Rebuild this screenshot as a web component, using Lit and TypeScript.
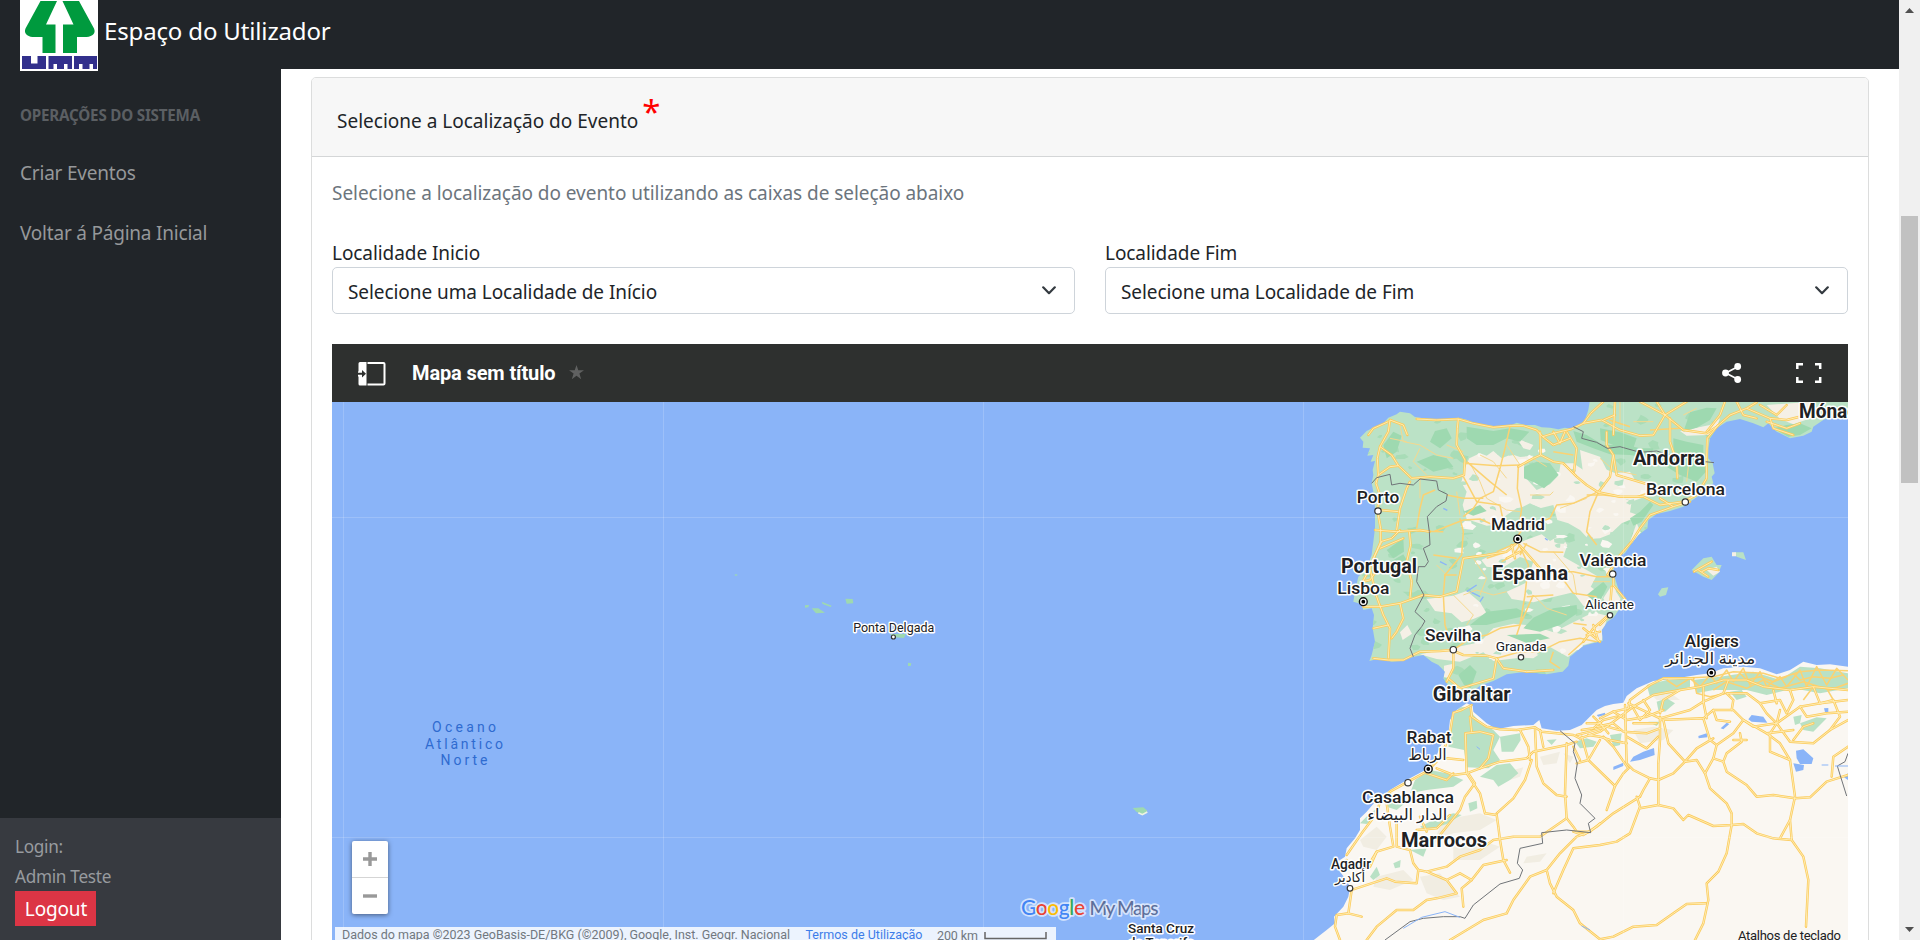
import { LitElement, html, svg, css } from "lit";
import { customElement, property } from "lit/decorators.js";

/* ---------- map data: north sheet (Iberia, southern France), 3 units per pixel ---------- */
const IBERIA =
  "M810 15 805 45 795 75 775 92 755 102 735 98 715 103 690 98 665 97 645 90 615 90 590 83 570 92 545 97 520 93 490 90 460 83 440 74 415 68 385 73 350 73 310 70 285 66 270 55 240 50 230 58 205 68 190 85 165 95 140 108 120 128 130 140 128 158 150 160 142 182 160 180 152 200 165 198 158 225 160 240 155 265 162 300 165 340 165 400 160 440 155 480 140 520 115 545 105 590 100 620 125 628 130 645 155 640 162 660 158 700 165 740 155 780 148 798 180 790 215 800 250 797 275 787 310 780 335 800 355 810 375 830 370 850 390 880 410 905 432 918 448 905 460 888 480 872 520 858 560 838 620 830 680 838 715 832 728 830 745 812 750 785 790 752 830 742 848 738 845 705 862 680 880 668 900 640 918 612 898 590 885 550 880 515 892 485 915 475 935 445 955 420 982 400 985 375 1010 357 1050 348 1090 335 1110 320 1140 300 1165 275 1180 265 1175 245 1184 235 1178 205 1165 190 1165 160 1170 130 1190 100 1220 80 1260 72 1300 85 1330 97 1345 85 1370 110 1410 130 1450 122 1475 110 1480 95 1510 75 1560 50 1600 40 1600 15Z";
const BEIGE_N = [
  "M436 215 448 190 480 175 500 182 520 168 545 190 575 178 600 186 640 182 612 205 618 250 650 285 690 268 716 240 722 205 760 205 790 225 800 250 850 262 862 300 900 305 935 320 930 352 960 362 905 385 870 418 840 430 805 432 780 405 745 385 712 375 700 330 660 340 630 325 590 345 570 372 548 388 500 392 440 372 428 330 440 290 424 262Z",
  "M625 432 665 418 690 438 722 420 742 450 730 485 770 508 830 542 812 575 850 602 832 640 790 632 760 592 700 606 640 622 575 612 560 590 620 562 640 500 600 486 545 520 500 515 484 495 560 460Z",
  "M320 612 400 602 440 588 480 622 500 655 460 672 425 682 395 655 345 648Z",
  "M480 742 520 700 580 686 640 692 700 712 760 682 820 652 862 662 846 735 790 750 744 786 690 756 640 790 600 788 520 798 490 772 420 800 350 792 300 778 400 758Z",
  "M780 165 840 185 866 236 930 230 945 255 1000 262 990 300 940 318 880 302 820 285 790 240Z",
  "M845 218 900 240 920 330 890 372 862 420 842 378 812 300Z",
  "M590 130 640 150 630 165 610 160Z",
  "M1080 108 1170 90 1200 70 1190 100 1165 120 1100 122Z",
  "M372 812 400 806 388 850 372 846Z",
  "M1340 30 1480 20 1500 60 1420 88 1380 72Z",
  "M930 440 950 385 962 412 944 446Z",
  "M262 690 276 716 248 735 240 712Z",
  "M850 610 882 560 888 590 902 612 870 650Z",
];
const GREEN_N = [
  "M612 215 650 200 690 205 716 240 690 265 672 280 642 262 612 250Z",
  "M440 95 520 108 570 100 628 110 600 140 560 130 520 150 470 150 440 130Z",
  "M760 108 800 120 850 150 920 150 960 160 1000 160 990 190 930 180 870 178 820 160 770 140Z",
  "M1060 130 1100 140 1150 150 1150 180 1158 230 1130 260 1080 240 1040 215 1010 210 1000 190 1060 182Z",
  "M840 100 900 112 950 130 940 160 880 150 842 135Z",
  "M1110 52 1160 38 1190 40 1170 75 1130 98 1090 110 1100 82Z",
  "M1360 100 1400 90 1440 85 1475 100 1440 120 1405 125Z",
  "M200 465 250 430 252 470 220 490Z",
  "M195 510 250 478 262 498 225 522Z",
  "M640 668 700 640 770 630 772 655 720 690 660 710 610 700Z",
  "M500 650 590 640 630 660 560 675 500 690 450 690Z",
  "M415 840 450 810 470 830 452 880 432 870Z",
  "M190 150 220 110 245 122 230 170 200 190Z",
  "M290 200 340 180 380 190 400 215 340 230Z",
  "M345 108 380 100 395 130 360 160 330 140Z",
  "M430 350 480 330 500 348 460 362Z",
  "M965 380 1000 330 990 320 960 350 930 370 940 392Z",
  "M560 720 660 716 690 730 620 744Z",
  "M800 600 850 560 862 575 835 630Z",
];
const MEADOW_N = ["M560 360 590 340 640 330 690 350 700 365 650 372 610 400 560 410 520 440 460 440 430 420 500 412Z"];
const ROADS_N = [
  "M210 75 205 110 180 155 172 190 175 240 168 265 180 300 172 345 182 400 182 440 165 480 150 520 128 560 150 555 168 530",
  "M205 80 160 100 145 120M180 155 215 180 235 212 275 250 330 245 400 250 432 240 435 195 410 150 412 100 415 72",
  "M175 240 210 215 235 212M210 75 250 90 262 120M290 72 350 75 415 72 460 85 520 97 570 92 610 92 650 105 668 125 700 115 755 102 790 85 845 75 900 105 960 122 1000 120 1035 60 1090 105 1160 115 1190 95 1230 60 1280 40 1310 22",
  "M660 110 662 180 640 190 595 215M662 180 700 200 730 205 770 245 800 270 835 292 900 305 970 305 1020 330 1090 320 1130 300 1160 250 1160 190 1162 130 1195 90",
  "M740 110 770 160 762 230M668 125 700 150 750 130M700 110 720 145 735 110M835 292 870 245 880 180 860 150 860 110",
  "M595 440 560 470 500 480 430 490 410 590 360 605 310 600 240 625 180 635 130 635",
  "M598 450 625 480 660 520 720 540",
  "M165 405 230 410 300 405 330 410M182 440 215 430 240 405M160 490 185 440M182 345 235 350M230 405 240 340 260 280 270 260",
  "M268 410 272 450 260 500 275 560 270 610M150 520 168 600 190 660 210 700 205 790M240 625 250 670 230 710 215 730M205 690 160 700",
  "M160 790 205 795 250 795 300 770 360 768 395 765 430 780 500 782 530 790 550 820 620 830 700 825M400 770 400 820 380 860",
  "M385 850 420 880 520 850 530 790",
  "M790 700 840 740M800 720 840 710M820 690 835 738M880 540 880 570 915 612M870 660 840 690M875 575 870 640M790 740 820 700 860 665M560 490 600 470M575 450 585 490",
  "M862 540 900 480 935 440 960 400 990 360 1060 335 1110 320M1060 335 1020 310M880 120 885 20M850 20 812 55 790 85M885 60 850 75",
  "M1010 20 1035 60 1100 20M1035 60 960 20M1050 70 1050 140 1070 200 1072 250M880 180 890 240 990 270M1160 110 1200 60 1215 20M1280 40 1350 70 1400 75 1460 60 1500 65M1340 80 1400 100 1440 85M1350 70 1360 100 1420 120M1250 20 1270 60 1310 70",
  "M1320 30 1370 60 1400 30M180 460 250 430M1122 530 1175 500M1145 530 1165 520 1195 525M1135 525 1165 545",
];
const MID_N = [
  "M570 95 555 160 540 220 520 290 480 310 460 340 430 365M430 245 470 320 540 330 550 380M440 200 510 260 560 300M430 205 530 212 600 210M595 215 592 280 605 340 595 410",
  "M835 292 810 350 800 410 830 450M580 440 610 400 690 370 710 330 760 325 830 292M610 445 660 470 730 472M720 530 760 530 830 545 875 545",
  "M598 450 625 510 615 600 600 690 590 720M720 540 760 595 830 605M420 370 430 410 425 480 375 540 370 600 375 690 385 720",
  "M340 480 410 490M372 540 410 540M380 300 430 310 490 310M340 410 430 375 480 372 520 390M290 408 370 410M290 400 300 340 310 300 345 285",
  "M530 790 600 770 660 770 720 740 780 730 830 740M400 765 450 730 500 720 540 700 600 690 640 600M620 605 700 600M700 770 690 800 720 820M745 780 790 740M760 685 800 690",
  "M950 305 1010 285M900 305 850 300 800 300M990 105 1080 100M868 75 930 95M700 170 760 180M545 500 580 480 600 450M500 490 560 470M620 445 600 480M530 470 600 440",
];
const FINE_N = [
  "M240 90 250 140 300 150 350 180 400 190M210 130 260 140M300 160 280 200 320 240M450 205 480 260 500 310M560 150 600 210M300 250 300 310M410 290 420 360M480 180 520 200 560 250M640 190 680 215",
  "M630 300 690 300 700 290M430 600 470 585 520 600 560 590M640 600 680 640 740 660M460 490 500 550 480 600M400 600 460 660 440 690M500 310 560 345 600 350M380 150 430 170M720 340 800 310M350 510 380 540",
  "M840 190 880 225 950 240M900 90 900 20M940 80 1000 80M1090 60 1130 40M1110 170 1100 260M700 470 760 540 770 600M820 560 870 560",
];
const BORDERS_N = [
  "M155 265 170 248 210 238 215 270 240 265 280 270 300 252 350 258 355 285 382 298 378 318 350 335 322 365 328 410 330 450 310 460 325 500 315 515 295 515 290 560 312 600 285 650 315 678 305 695 285 720 270 760 280 785",
  "M760 95 790 110 785 130 830 142 862 160 900 155 960 172 1010 168 1050 180M1155 200 1182 203",
];
/* ---------- map data: south sheet (Maghreb), 3 units per pixel ---------- */
const AFRICA =
  "M95 785 140 750 165 730 162 710 190 680 205 650 210 625 203 605 180 575 165 550 195 530 200 505 225 475 240 450 240 415 260 395 290 360 330 330 380 300 440 268 465 240 480 200 505 165 510 120 530 90 560 70 578 78 580 95 620 130 650 148 700 138 760 135 778 120 785 145 830 152 870 150 905 135 925 115 950 90 975 78 1000 72 1030 68 1040 48 1070 25 1120 3 1200 -7 1250 -15 1290 -20 1330 -35 1390 -40 1440 -35 1490 -17 1530 -30 1570 -55 1610 -45 1650 -47 1720 -38 1720 790Z";
const GREEN_S = [
  "M515 110 540 82 570 80 580 105 600 125 640 150 660 170 640 210 660 240 625 265 560 262 552 210 505 200Z",
  "M405 300 450 270 500 280 550 300 520 320 440 330 390 340Z",
  "M660 170 720 160 722 180 700 215 665 215Z",
  "M650 255 690 250 715 280 690 300 655 320 640 300 600 290Z",
  "M320 365 370 340 372 372 350 390 325 382Z",
  "M420 440 470 415 520 400 545 405 500 432 440 452Z",
  "M565 370 590 362 592 385 570 395Z",
  "M270 590 290 560 300 585 280 600Z",
  "M340 550 362 540 360 562 345 565Z",
  "M240 430 270 400 300 380 290 405 260 432Z",
  "M885 185 920 175 950 185 940 200 900 205Z",
  "M800 180 830 178 815 195Z",
  "M1100 15 1160 0 1230 -5 1230 20 1170 40 1110 50Z",
  "M1240 0 1320 -10 1420 -25 1500 0 1560 -40 1620 -35 1704 -20 1704 25 1620 40 1540 25 1460 45 1400 30 1300 30 1250 40Z",
  "M1130 65 1160 55 1185 70 1155 95 1135 90Z",
  "M1350 35 1385 30 1400 50 1370 60Z",
  "M1560 130 1610 112 1640 115 1600 155 1570 150Z",
  "M1540 110 1565 105 1560 130 1545 135Z",
  "M990 165 1025 160 1020 195 1000 200Z",
  "M1105 125 1140 125 1130 138Z",
  "M390 510 440 505 430 530Z",
];
const TAN_S = [
  "M240 480 290 440 320 470 290 510 250 500Z",
  "M540 410 600 400 650 420 600 450 520 460 460 490 480 440Z",
  "M290 590 370 570 400 600 330 630 280 620Z",
  "M420 590 480 580 510 620 540 650 490 660 440 640Z",
  "M520 500 600 480 660 500 600 540 520 540Z",
  "M780 230 840 215 830 250 790 255Z",
  "M850 220 880 230 870 250Z",
  "M740 530 800 520 780 545 730 550Z",
  "M700 270 730 262 720 290 690 300Z",
  "M1110 40 1160 30 1200 60 1130 60Z",
  "M1060 150 1120 140 1180 150 1150 180 1080 190Z",
];
const LAKES = [
  "M1060 230 1090 215 1105 210 1122 204 1124 225 1080 240 1050 245ZM1000 260 1030 248 1030 258 1000 270ZM1255 168 1280 160 1282 172 1256 175ZM1322 145 1340 128 1348 132 1330 148ZM1405 118 1415 105 1450 110 1462 128 1415 125ZM1548 212 1570 208 1600 235 1595 252 1560 252 1550 235ZM1540 250 1572 255 1570 270 1548 275ZM1690 290 1704 280 1704 300ZM950 105 975 98 976 104 955 110ZM1632 85 1645 84 1645 96 1635 96Z",
];
const ROADS_S = [
  "M575 75 545 90 520 98 510 160 495 200 470 245 440 275 385 305 330 335 300 365 290 400 245 460 200 525",
  "M572 80 575 110 620 140 660 148 710 150 765 142 785 155 830 160 880 165 900 175M470 265 520 285 560 280 600 265 660 245 740 235 760 215 860 195 890 185",
  "M556 160 560 280 600 340 615 400 650 405 655 440 660 480 670 540 690 578M556 160 600 155 640 165 625 235 600 265M570 110 575 155M500 235 550 240M720 150 745 200 750 240",
  "M765 145 770 260 790 310 830 345 860 350M780 150 790 200M755 240 735 300 700 355 650 400M860 190 855 340 860 415 880 440 890 455 930 455",
  "M480 465 540 390 555 350 585 310 565 280M440 280 500 300 520 280M330 340 320 370 330 440 340 500 290 515 275 540M350 430 350 500 390 510 400 550 415 570 410 610 345 605 320 595 220 628",
  "M415 570 440 575 500 600 540 580 575 600 545 625 550 680M440 575 500 560 540 530 600 510 640 480 700 470 780 470 860 415M500 600 530 640 470 655 440 660 400 690 350 690 320 715 290 740 260 780",
  "M575 600 610 555 680 540M410 450 470 445 510 405M300 365 340 360M215 630 205 700 245 710M205 700 170 705 165 740 180 780M510 780 560 750 610 720 680 700 700 660 750 590 800 570 840 520 890 470 930 455 960 430",
  "M420 410 440 455M270 560 290 515M170 560 200 540M800 570 810 610 830 650 880 690 900 730 960 778 1000 770 1060 740 1130 735 1180 700 1220 672 1278 670",
  "M820 640 850 570 880 505 960 495 1010 485 1050 460 1080 380 1070 350M880 455 910 465 950 440 1000 400 1080 350M980 390 1005 318 1030 280 1045 265",
  "M905 170 925 240 1005 318M890 250 925 240 960 180M900 175 960 155 1020 110 1060 80 1120 45 1200 30 1260 20 1330 0 1400 0 1450 20 1530 30 1600 20 1704 30",
  "M960 115 1000 95 1045 85 1050 60 1110 15 1150 -5 1240 -5M1035 75 1040 250 1060 270 1110 295 1135 300M1045 265 1000 200 970 170M1140 110 1140 180 1135 250 1135 375 1180 385 1210 420 1225 405 1300 438 1355 435 1390 432 1430 460 1480 475 1535 480",
  "M1110 295 1090 330 1080 350M1080 385 1135 375M1135 300 1180 280 1215 245 1165 190 1150 120M1215 245 1250 240 1275 280 1290 325 1340 370 1355 400 1355 435 1340 520 1315 575 1280 610 1285 660 1270 730 1245 780",
  "M1140 120 1270 115 1290 180 1310 195 1300 235 1275 280M1215 245 1250 205 1300 175M1310 195 1360 160 1390 120 1460 160 1500 190 1530 240 1545 350 1530 420 1535 480 1570 530 1585 600 1578 740",
  "M1300 235 1330 245 1340 275 1400 315 1430 350 1480 345 1545 355 1590 352 1640 305 1704 285M1380 160 1385 185 1340 220 1330 245M1270 115 1300 90 1360 90 1390 120M1530 420 1500 475",
  "M1045 70 1140 115 1230 90 1270 65 1280 115M1060 130 1130 130M1000 95 1040 120 1100 110 1150 90M950 140 1000 130 1030 155 1100 160 1140 145M1040 170 1100 205 1135 170M1140 100 1150 60 1200 30",
  "M1270 65 1330 40 1345 0M1270 65 1270 20M1355 90 1360 60 1340 40 1400 40 1440 70 1460 100 1490 130 1560 80 1620 70 1704 60M1390 120 1420 140 1490 130 1470 160 1470 215 1530 240M1490 130 1530 185 1600 190 1650 150 1704 120",
  "M1440 70 1500 60 1520 100 1540 60 1530 30M1490 130 1500 90M1560 80 1580 110 1640 100 1704 95M1540 180 1570 140 1600 130M1620 70 1660 60 1680 110 1650 150M1600 20 1620 70M1480 30 1490 70",
  "M1655 290 1660 230 1704 200M1460 160 1540 150M1300 90 1310 120 1350 125M1400 180 1360 180",
  "M880 200 900 240M905 150 940 145 970 120 1010 110M920 130 960 130 985 160M940 110 970 140M925 165 960 170 990 180 1040 190M890 165 930 155 980 140 1020 150M1060 85 1080 120 1110 90M1090 60 1110 90",
];
/* dense coastal street web around Algiers */
const WEB = [
  "M1160 0 1190 20 1230 -5 1260 20 1290 -15 1310 10 1340 -30 1360 5 1390 -35 1410 15 1440 -25 1460 20 1500 -10 1520 20 1560 -30 1580 20 1610 -40 1640 15 1670 -35 1704 0",
  "M1200 -5 1300 -10 1360 -25 1450 -20 1500 -5 1560 -25 1620 -30 1704 -28M1300 30 1340 5 1400 25 1450 0 1500 25 1570 5 1650 30 1704 10",
  "M1380 -20 1400 0 1440 -10 1480 5 1520 -10M1540 -20 1560 0 1600 -10 1650 -5 1690 -15M1240 -5 1250 40 1290 50 1340 40M1600 20 1570 60M1660 60 1640 25",
];
const BORDERS_S = [
  "M840 152 885 190 880 215 892 250 885 295 905 345 900 370 945 415 925 430 932 458 860 450 785 458 788 490 720 505 712 550 728 570 718 595 660 612 580 675 555 715 540 710 490 710 430 715 390 725 315 780",
  "M1704 220 1695 245 1672 258 1685 300 1700 348",
];

/* small irregular vegetation patches, spread with a fixed-seed generator */
function patches(seed: number, count: number, x0: number, y0: number, w: number, h: number, size: number): string {
  let s = seed;
  const rnd = () => ((s = (s * 1103515245 + 12345) % 2147483648) / 2147483648);
  let d = "";
  for (let i = 0; i < count; i++) {
    const cx = x0 + rnd() * w, cy = y0 + rnd() * h, r = size * (0.4 + rnd());
    for (let k = 0; k < 7; k++) {
      const a = (k / 7) * Math.PI * 2, q = r * (0.45 + rnd() * 0.8);
      d += `${k ? "L" : "M"}${(cx + Math.cos(a) * q * 1.3).toFixed(0)} ${(cy + Math.sin(a) * q * 0.8).toFixed(0)}`;
    }
    d += "Z";
  }
  return d;
}
const WOODS = patches(7, 240, 130, 30, 1430, 860, 13);
const CLEARINGS = patches(21, 70, 420, 150, 560, 640, 12);
const COPSES = patches(33, 55, 430, 170, 520, 620, 10);

type Label = [text: string, x: number, y: number, size: number, weight: number, length: number];
const LABELS: Label[] = [
  ["Porto", 1378, 502.5, 16.5, 500, 42.5],
  ["Madrid", 1518, 530, 16.5, 500, 54],
  ["Portugal", 1379, 572.7, 20, 700, 76],
  ["Lisboa", 1363.3, 593.7, 16.5, 500, 52],
  ["Espanha", 1530, 579.7, 20, 700, 76],
  ["Sevilha", 1453, 641.4, 16.5, 500, 56],
  ["Granada", 1521.2, 650.8, 13.5, 400, 51],
  ["Valência", 1613, 566.3, 16.5, 500, 67],
  ["Alicante", 1609.5, 609.2, 13.5, 400, 49],
  ["Andorra", 1669, 465, 20, 700, 72],
  ["Barcelona", 1685.5, 494.7, 16.5, 500, 79],
  ["Algiers", 1711.8, 646.8, 16.5, 500, 54],
  ["مدينة الجزائر", 1710.3, 664, 15.5, 400, 90],
  ["Gibraltar", 1471.7, 701, 20, 700, 78],
  ["Rabat", 1429, 743, 16.5, 500, 45],
  ["الرباط", 1427.5, 760.3, 15.5, 400, 38],
  ["Casablanca", 1408, 803, 16.5, 500, 92],
  ["الدار البيضاء", 1407.3, 819.5, 15.5, 400, 80],
  ["Marrocos", 1444, 847, 20, 700, 86],
  ["Agadir", 1351, 868.6, 14.5, 500, 40],
  ["أكادير", 1350, 882.3, 13.5, 400, 30],
  ["Ponta Delgada", 893.7, 631.8, 13, 400, 81],
  ["Santa Cruz", 1161, 933, 13.5, 500, 66],
  ["de Tenerife", 1161, 947, 13.5, 500, 66],
];
const TOWNS: [number, number, number][] = [
  [1378, 511, 3.2], [1453.3, 649.7, 3.2], [1521, 657.3, 2.7], [1612.7, 574, 3.2], [1610, 615.3, 2.7],
  [1685.3, 502, 3.2], [1408, 782.7, 3.2], [1350, 888.3, 2.8], [893.4, 637, 2],
];
const CAPITALS: [number, number][] = [[1517.7, 539], [1363.3, 601.7], [1711.3, 672.7], [1428.3, 769]];

@customElement("event-map")
class EventMap extends LitElement {
  static styles = css`
    :host { display: block; background: #2e302f; color: #fff; font-family: Roboto, sans-serif; }
    .bar { display: flex; align-items: center; height: 58px; box-sizing: border-box; padding: 0 26px; }
    .toggle { width: 28px; height: 24px; margin-top: 2px; }
    .title { width: 145px; margin-left: 26px; font-size: 20px; line-height: 59px; font-weight: 700; letter-spacing: -.12px; white-space: nowrap; }
    .star { width: 15px; height: 15px; margin-left: 12px; margin-top: -2px; }
    .share { width: 20px; height: 20px; margin-left: auto; }
    .full { width: 26px; height: 20px; margin-left: 54px; }
    .canvas { position: relative; height: 538px; overflow: hidden; background: #8ab4f8; }
    .chart { display: block; width: 1516px; height: 538px; }
    .zoom { position: absolute; left: 20px; top: 439px; width: 36px; height: 73px; display: grid; grid-template-rows: 36px 1px 36px;
      justify-items: center; align-items: center; background: #fff; border-radius: 2px; box-shadow: 0 1px 5px rgba(0, 0, 0, .5); }
    .rule { width: 36px; height: 1px; background: #d5d5d5; }
    .sign { width: 14px; height: 14px; fill: #999; }
    .tile { stroke: #fff; stroke-opacity: .17; }
    .land { fill: #bbe2c6; }
    .sand { fill: #faf7f2; }
    .beige { fill: #f5f0e6; }
    .pale { fill: #faf7f2; }
    .tan { fill: #f1ede2; }
    .wood { fill: #9ed9b0; }
    .tint { fill: #a8dcb7; }
    .wood2 { fill: #b9e1c5; }
    .lake { fill: #8ab4f8; }
    .casing { fill: none; stroke: #fbcb5c; stroke-width: 7.4; stroke-linejoin: round; stroke-linecap: round; }
    .core { fill: none; stroke: #fff0bd; stroke-width: 2.6; stroke-linejoin: round; }
    .mid { fill: none; stroke: #fbd272; stroke-width: 4.6; stroke-linejoin: round; }
    .fine { fill: none; stroke: #f5d88e; stroke-width: 3; stroke-linejoin: round; }
    .border { fill: none; stroke: #6f7377; stroke-width: 3; stroke-linejoin: round; }
    .label { fill: #202124; stroke: #fff; stroke-width: 3px; stroke-linejoin: round; paint-order: stroke; text-anchor: middle;
      font-family: Roboto, "DejaVu Sans", sans-serif; }
    .w4 { font-weight: 400; } .w5 { font-weight: 500; } .w7 { font-weight: 700; }
    .town { fill: #fff; stroke: #333; stroke-width: 1.2; }
    .cap { fill: #fff; stroke: #111; stroke-width: 1.4; }
    .sea { fill: #2f6bd0; font-size: 14px; text-anchor: middle; }
    .brand { font: 500 21px Lato, sans-serif; stroke: #fff; stroke-opacity: .65; stroke-width: 3.5px; paint-order: stroke; stroke-linejoin: round; }
    .brand2 { font: 500 19px Lato, sans-serif; fill: #5d6f9b; }
    .legal { fill: #717880; font-size: 12.5px; }
    .terms { fill: #3d7de9; font-size: 12.5px; }
    .keys { fill: #202124; font-size: 13px; }
  `;

  private roads(paths: string[]) {
    return svg`${paths.map((d) => svg`<path class="casing" d=${d}/>`)}${paths.map((d) => svg`<path class="core" d=${d}/>`)}`;
  }
  private fills(paths: string[], cls: string) {
    return svg`${paths.map((d) => svg`<path class=${cls} d=${d}/>`)}`;
  }

  render() {
    return html`
      <div class="bar">
        <svg class="toggle" viewBox="0 0 28 24"><path fill="#fff" d="M2 0h6.500v23.500H2a1.500 1.500 0 0 1-1.500-1.500v-7.500H0v-5h.5v-8A1.500 1.500 0 0 1 2 0z"/><path fill="#2e302f" d="M0 10.700h4V8l4 3.800L4 15.500v-2.800H0z"/><path d="M9.500 1h16a1 1 0 0 1 1 1v19.500a1 1 0 0 1-1 1h-16" fill="none" stroke="#fff" stroke-width="2"/></svg>
        <span class="title">Mapa sem título</span>
        <svg class="star" viewBox="0 0 16 16"><path fill="#606161" d="M8 0l1.900 5.600H16l-4.900 3.500 1.900 6L8 11.500 3 15.100l1.900-6L0 5.600h6.100z"/></svg>
        <svg class="share" viewBox="0 0 20 20"><path d="M15.700 3.800 3.800 10l11.900 6.200" fill="none" stroke="#fff" stroke-width="1.700"/><g fill="#fff"><circle cx="15.700" cy="3.500" r="3.400"/><circle cx="3.500" cy="10" r="3.400"/><circle cx="15.700" cy="16.500" r="3.400"/></g></svg>
        <svg class="full" viewBox="0 0 26 20"><path d="M1.300 6V1.300H7M19 1.300h5.200V6M24.200 14v4.700H19M7 18.700H1.300V14" fill="none" stroke="#fff" stroke-width="2.500"/></svg>
      </div>
      <div class="canvas">
        <svg class="chart" viewBox="332 402 1516 538">
          <clipPath id="north"><path d=${IBERIA} /></clipPath>
          <g transform="translate(1320 395) scale(.33333)">
            <path class="land" d=${IBERIA} />
            <g clip-path="url(#north)">
              <path class="tint" d=${WOODS} />
              ${this.fills(BEIGE_N, "beige")}
              <path class="pale" d=${CLEARINGS} />
              <path class="land" d=${COPSES} />
              ${this.fills(MEADOW_N, "land")}${this.fills(GREEN_N, "wood")}
            </g>
            <path class="wood2" d="M1115 525 1150 490 1175 485 1190 510 1205 510 1195 535 1175 555 1150 545ZM1240 472 1270 472 1278 495 1250 485ZM1014 598 1025 580 1045 577 1038 600 1020 605Z"/>
            <path class="beige" d="M1236 472h12v12h-12zM1160 525l30-10 10 15-20 12z"/>
            <path d="M360 500l20 10M440 590l30-20M450 590l30 15M480 620l10-15M370 340l12 6M560 545l8 8M675 430l8 6" fill="none" stroke="#8ab4f8" stroke-width="4"/>
            ${this.fills(FINE_N, "fine")}${this.fills(MID_N, "mid")}${this.roads(ROADS_N)}${this.fills(BORDERS_N, "border")}
          </g>
          <g transform="translate(1280 680) scale(.33333)">
            <path class="sand" d=${AFRICA} />
            ${this.fills(TAN_S, "tan")}${this.fills(GREEN_S, "wood2")}${this.fills(LAKES, "lake")}
            ${this.fills(WEB, "mid")}${this.roads(ROADS_S)}${this.fills(BORDERS_S, "border")}
            <path d="M370 745 425 712 495 695 540 712M590 200l10 8M1625 255h20M1665 258h40M905 738l25 12" fill="none" stroke="#8ab4f8" stroke-width="3"/>
          </g>
          <g transform="translate(740 560) scale(.33333)">
            <path class="wood" d="M215 145 235 145 255 158 228 160ZM195 136 207 135 205 142 195 143ZM245 125 275 137 272 141 248 132ZM316 116 338 117 340 130 320 131ZM450 222 498 222 492 234 465 232ZM504 308 514 310 512 318 504 318ZM1178 744 1210 742 1222 752 1210 765 1190 756Z"/>
            <path d="M1195 758l12 6 15-8" fill="none" stroke="#eef3e4" stroke-width="5"/>
          </g>
          <ellipse class="wood" cx="736" cy="575" rx="1.500" ry=".8"/>
          ${[343.5, 663.5, 983.5, 1303.5, 1623.5].map((x) => svg`<path class="tile" d="M${x} 402V940"/>`)}
          ${[517.5, 837.5].map((y) => svg`<path class="tile" d="M332 ${y}H1848"/>`)}
          ${TOWNS.map(([x, y, r]) => svg`<circle class="town" cx=${x} cy=${y} r=${r}/>`)}
          ${CAPITALS.map(([x, y]) => svg`<circle class="cap" cx=${x} cy=${y} r="3.900"/><circle cx=${x} cy=${y} r="1.900"/>`)}
          ${LABELS.map(([t, x, y, s, w, len]) => svg`<text class="label w${w / 100}" x=${x} y=${y} font-size=${s} textLength=${len} lengthAdjust="spacingAndGlyphs">${t}</text>`)}
          <text class="label w7" x="1833.500" y="418" font-size="19.500" textLength="69" lengthAdjust="spacingAndGlyphs">Mónaco</text>
          <text class="sea" x="464" y="732" textLength="64">Oceano</text>
          <text class="sea" x="464" y="748.500" textLength="78">Atlântico</text>
          <text class="sea" x="464" y="764.500" textLength="47">Norte</text>
          <text class="brand" x="1021" y="915" textLength="64"><tspan fill="#4285f4">G</tspan><tspan fill="#ea4335">o</tspan><tspan fill="#fbbc04">o</tspan><tspan fill="#4285f4">g</tspan><tspan fill="#34a853">l</tspan><tspan fill="#ea4335">e</tspan></text>
          <text class="brand brand2" x="1089.500" y="915" textLength="69">My Maps</text>
          <path fill="#fff" fill-opacity=".84" d="M335 927h721v14H335z"/>
          <text class="legal" x="342" y="939" textLength="448">Dados do mapa ©2023 GeoBasis-DE/BKG (©2009), Google, Inst. Geogr. Nacional</text>
          <text class="terms" x="805.500" y="939" textLength="117">Termos de Utilização</text>
          <text class="legal" x="937" y="939.500" textLength="41">200 km</text>
          <path d="M985 932v6.500h61V932" fill="none" stroke="#666" stroke-width="1.500"/>
          <text class="keys" x="1738" y="939.700" textLength="103">Atalhos de teclado</text>
        </svg>
        <div class="zoom">
          <svg class="sign" viewBox="0 0 14 14"><path d="M5.300 0h3.400v5.300H14v3.400H8.700V14H5.300V8.700H0V5.300h5.300z"/></svg>
          <div class="rule"></div>
          <svg class="sign" viewBox="0 0 14 14"><path d="M0 5.300h14v3.400H0z"/></svg>
        </div>
      </div>`;
  }
}

@customElement("place-select")
class PlaceSelect extends LitElement {
  @property() label = "";
  @property() value = "";
  static styles = css`
    :host { display: block; letter-spacing: -.07px; }
    .label { height: 29px; line-height: 30px; }
    .box { display: flex; justify-content: space-between; align-items: center; height: 47px; box-sizing: border-box; padding: 2px 18px 0 15px;
      border: 1px solid #ced4da; border-radius: 5px; }
    .chev { width: 14px; height: 9px; margin-top: -2px; }
  `;
  render() {
    return html`
      <div class="label">${this.label}</div>
      <div class="box"><span>${this.value}</span>
        <svg class="chev" viewBox="0 0 14 9"><path d="M1.200 1.300 7 7.200l5.800-5.900" fill="none" stroke="#343a40" stroke-width="2.200" stroke-linecap="round" stroke-linejoin="round"/></svg>
      </div>`;
  }
}

@customElement("app-root")
class AppRoot extends LitElement {
  static styles = css`
    :host { display: block; width: 1920px; height: 940px; overflow: hidden; font: 19px "Noto Sans", "Open Sans", sans-serif; color: #212529; background: #fff; }
    .window { display: grid; grid-template-columns: 1899px 21px; height: 940px; }
    .page { display: grid; grid-template: 69px 871px / 281px 1618px; }
    .top { grid-column: 1 / 3; display: flex; align-items: flex-start; gap: 5px; padding-left: 20px; background: #212529; color: #fff; z-index: 1; }
    .logo { width: 78px; height: 71px; flex: none; }
    .brand { padding-left: 1px; font-size: 24px; line-height: 61px; letter-spacing: -.15px; }
    .side { display: flex; flex-direction: column; background: #212529; color: #96989a; }
    .nav { flex: 1; display: flex; flex-direction: column; padding: 34px 20px 0; }
    .head { font-size: 15.200px; font-weight: 700; line-height: 24px; letter-spacing: -.21px; color: #5b5f63; margin-bottom: 31px; }
    .link { line-height: 30px; margin-bottom: 30px; letter-spacing: -.21px; }
    .foot { height: 108px; padding: 14px 15px 0; background: #373a40; font-size: 17.200px; line-height: 30px; letter-spacing: -.3px; color: #979b9f; }
    .out { display: flex; width: 81px; height: 35px; box-sizing: border-box; justify-content: center; margin-top: -1px; padding: 1px 0 0 1px; line-height: 35px; font-size: 19px; letter-spacing: -.15px; color: #fff; background: #dc3545; }
    .main { padding: 8px 30px 0; overflow: hidden; }
    .card { border: 1px solid #dcdddd; border-radius: 5px; overflow: hidden; height: 900px; }
    .cardhead { display: flex; height: 50px; padding: 28px 25px 0; background: #f7f7f7; border-bottom: 1px solid #d4d6d7; line-height: 30px; }
    .req { margin: -14px 0 0 4px; font-size: 33px; line-height: 40px; color: #f00; }
    .body { padding: 21px 20px 0; }
    .desc { line-height: 30px; margin-bottom: 30px; letter-spacing: -.05px; color: #6c757d; }
    .cols { display: grid; grid-template-columns: 1fr 1fr; gap: 30px; margin-bottom: 30px; }
    .scroll { display: flex; flex-direction: column; align-items: center; background: #f0f0f0; }
    .arrow { width: 9px; height: 5px; margin: 8px 0; fill: #505050; }
    .thumb { width: 17px; height: 267px; margin-top: 195px; margin-bottom: auto; background: #c1c1c1; }
  `;
  render() {
    return html`
      <div class="window">
        <div class="page">
          <div class="top">
            <svg class="logo" viewBox="0 0 78 71">
              <path fill="#fff" d="M0 0h78v71H0z"/>
              <path fill="#009a3e" d="M20.500 1H37L26 24.500h9.500V53H22.500V37H12.500C7 36.500 3.500 33 5.500 28.500zM59 1H42.500L53.500 24.500H43V53h14V37h9.500C73 36.500 76 33 74 28.500z"/>
              <path fill="#32308c" d="M2 56h9v7.500h6.500V56H26v13H2zM28.500 56H52v13h-4.500v-5H44v5h-7v-5h-3.500v5h-5zM54 56h23v13h-4v-5h-3.500v5h-7v-5H59v5h-5z"/>
            </svg>
            <span class="brand">Espaço do Utilizador</span>
          </div>
          <div class="side">
            <div class="nav">
              <div class="head">OPERAÇÕES DO SISTEMA</div>
              <div class="link">Criar Eventos</div>
              <div class="link">Voltar á Página Inicial</div>
            </div>
            <div class="foot">
              <div>Login:</div>
              <div>Admin Teste</div>
              <div class="out">Logout</div>
            </div>
          </div>
          <div class="main">
            <div class="card">
              <div class="cardhead"><span>Selecione a Localização do Evento</span><span class="req">*</span></div>
              <div class="body">
                <div class="desc">Selecione a localização do evento utilizando as caixas de seleção abaixo</div>
                <div class="cols">
                  <place-select label="Localidade Inicio" value="Selecione uma Localidade de Início"></place-select>
                  <place-select label="Localidade Fim" value="Selecione uma Localidade de Fim"></place-select>
                </div>
                <event-map></event-map>
              </div>
            </div>
          </div>
        </div>
        <div class="scroll">
          <svg class="arrow" viewBox="0 0 9 5"><path d="M4.500 0 9 5H0z"/></svg>
          <div class="thumb"></div>
          <svg class="arrow" viewBox="0 0 9 5"><path d="M0 0h9L4.500 5z"/></svg>
        </div>
      </div>`;
  }
}
